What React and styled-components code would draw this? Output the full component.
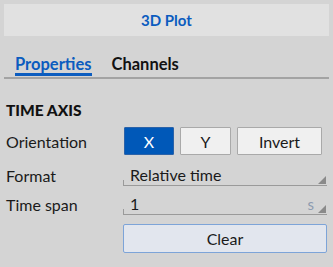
import React from "react";
import styled, { createGlobalStyle } from "styled-components";

const Global = createGlobalStyle`
  html, body { margin: 0; padding: 0; background: #d4d4d4; }
  body { font-family: Lato, "Noto Sans", sans-serif; color: #1a1a1a; }
`;

const Page = styled.div`
  width: 333px;
  height: 267px;
  box-sizing: border-box;
  padding: 4px 4px 0 4px;
  background: #d4d4d4;
`;

const TitleBar = styled.div`
  height: 32px;
  background: #e1e1e1;
  display: flex;
  align-items: center;
  justify-content: center;
  color: #0b5cbf;
  font-weight: 700;
  font-size: 15px;
`;

const TabBar = styled.div`
  margin-top: 19px;
  display: flex;
  gap: 20px;
  padding-left: 11px;
  border-bottom: 2px solid #a3a3a3;
`;

const Tab = styled.div`
  font-size: 16.5px;
  font-weight: 700;
  line-height: 18px;
  color: ${(p) => (p.$active ? "#0b5cbf" : "#111")};
  border-bottom: 3px solid ${(p) => (p.$active ? "#0b5cbf" : "transparent")};
  margin-bottom: 1px;
`;

const Section = styled.div`
  padding: 0 2px;
`;

const Heading = styled.div`
  margin-top: 23px;
  font-size: 15.5px;
  font-weight: 900;
  line-height: 16px;
  color: #111;
`;

const Row = styled.div`
  display: grid;
  grid-template-columns: 117px 1fr;
  align-items: center;
  height: ${(p) => p.$h}px;
  margin-top: ${(p) => p.$mt || 0}px;
`;

const Label = styled.div`
  font-size: 16px;
  color: #1a1a1a;
`;

const Buttons = styled.div`
  display: flex;
  gap: 6px;
  padding-left: 1px;
`;

const ToggleButton = styled.button`
  width: ${(p) => p.$w}px;
  height: 28px;
  box-sizing: border-box;
  font-family: inherit;
  font-size: 16px;
  padding: 0;
  border: 1px solid ${(p) => (p.$on ? "#2b62a8" : "#a9a9a9")};
  background: ${(p) => (p.$on ? "#0058b8" : "#f0f0f0")};
  color: ${(p) => (p.$on ? "#ffffff" : "#1a1a1a")};
  border-radius: 1px;
`;

const Field = styled.div`
  position: relative;
  height: 21px;
  border-bottom: 1px solid #9a9a9a;
  display: flex;
  align-items: center;
  padding: 0 7px;
  font-size: 16px;
  color: #1a1a1a;
  &::before {
    content: "";
    position: absolute;
    left: 0;
    bottom: 0;
    width: 1px;
    height: 5px;
    background: #9a9a9a;
  }
`;

const Value = styled.span`
  flex: 1;
`;

const Unit = styled.span`
  color: #8d9bb0;
  font-size: 15px;
  margin-right: 6px;
`;

const Corner = styled.svg`
  position: absolute;
  right: 1px;
  bottom: 1px;
`;

const ClearButton = styled.button`
  height: 29px;
  width: 100%;
  box-sizing: border-box;
  background: #e2e6ee;
  border: 1px solid #7da4d8;
  border-radius: 2px;
  font-family: inherit;
  font-size: 16px;
  color: #1a1a1a;
`;

const Triangle = () => (
  <Corner width="8" height="8" viewBox="0 0 8 8">
    <polygon points="8,0 8,8 0,8" fill="#8a8a8a" />
  </Corner>
);

export default function App() {
  return (
    <Page>
      <Global />
      <TitleBar>3D Plot</TitleBar>
      <TabBar>
        <Tab $active>Properties</Tab>
        <Tab>Channels</Tab>
      </TabBar>
      <Section>
        <Heading>TIME AXIS</Heading>
        <Row $h={28} $mt={9}>
          <Label>Orientation</Label>
          <Buttons>
            <ToggleButton $w={50} $on>X</ToggleButton>
            <ToggleButton $w={51}>Y</ToggleButton>
            <ToggleButton $w={85}>Invert</ToggleButton>
          </Buttons>
        </Row>
        <Row $h={22} $mt={9}>
          <Label>Format</Label>
          <Field>
            <Value>Relative time</Value>
            <Triangle />
          </Field>
        </Row>
        <Row $h={22} $mt={7}>
          <Label>Time span</Label>
          <Field>
            <Value>1</Value>
            <Unit>s</Unit>
            <Triangle />
          </Field>
        </Row>
        <Row $h={29} $mt={9}>
          <div />
          <ClearButton>Clear</ClearButton>
        </Row>
      </Section>
    </Page>
  );
}
